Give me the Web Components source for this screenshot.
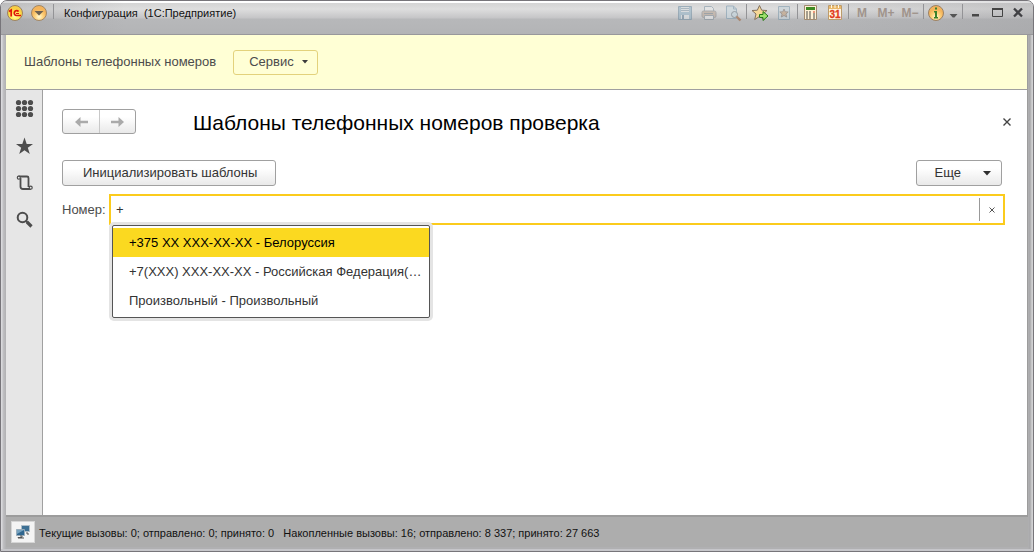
<!DOCTYPE html>
<html lang="ru">
<head>
<meta charset="utf-8">
<title>Конфигурация (1С:Предприятие)</title>
<style>
html, body { margin: 0; background: #fff; }
body { font-family: "Liberation Sans", Arial, sans-serif; font-size: 13px; line-height: 16px; color: #4c4c4c; }
</style>
</head>
<body>
<app-window>
  <title-bar slot="title" caption="Конфигурация  (1С:Предприятие)"></title-bar>
  <section-panel slot="section" caption="Шаблоны телефонных номеров">Сервис</section-panel>
  <side-nav slot="nav"></side-nav>
  <form-page caption="Шаблоны телефонных номеров проверка">
    <push-button slot="commands">Инициализировать шаблоны</push-button>
    <push-button slot="commands" menu>Еще</push-button>
    <suggest-field label="Номер:" value="+">
      <suggest-item selected>+375 XX XXX-XX-XX - Белоруссия</suggest-item>
      <suggest-item>+7(XXX) XXX-XX-XX - Российская Федерация(…</suggest-item>
      <suggest-item>Произвольный - Произвольный</suggest-item>
    </suggest-field>
  </form-page>
  <status-bar slot="status">Текущие вызовы: 0; отправлено: 0; принято: 0   Накопленные вызовы: 16; отправлено: 8 337; принято: 27 663</status-bar>
</app-window>
<script>
const define = (name, render) => customElements.define(name, class extends HTMLElement {
  constructor() {
    super();
    this.attachShadow({ mode: 'open' });
  }
  connectedCallback() {
    this.shadowRoot.innerHTML = '<style>*{box-sizing:border-box}button{font:inherit;color:inherit;margin:0;padding:0;border:0;background:none}svg{display:block}</style>' + render(this);
  }
});

define('app-window', () => `
<style>
:host { display: flex; flex-direction: column; box-sizing: border-box; min-height: 100vh; padding: 0 5px 4px;
  border: 1px solid #77757a; border-radius: 7px 7px 0 0;
  background: linear-gradient(90deg, #d9d9dc 0 1px, #c1c1c4 2px, #b0b0b2 5px, #b0b0b2 calc(100% - 5px), #a8a8aa calc(100% - 3px), #d0d0d2 calc(100% - 1px)); box-shadow: inset 0 -2px #c6c6ca; }
.middle { display: flex; flex: 1; border: 1px solid #9c9c9c; border-width: 0 1px 2px 0; background: #fff; }
main { flex: 1; min-width: 0; }
</style>
<slot name="title"></slot>
<slot name="section"></slot>
<div class="middle"><slot name="nav"></slot><main><slot></slot></main></div>
<slot name="status"></slot>`);

const icons = {
  save: '<g opacity=".55"><path d="M1.500 1.500h13v13h-13z" fill="#8fb0c4" stroke="#6d8ba0"/><path d="M4 2h8v5H4z" fill="#d9e0e4"/><path d="M4 3.500h8M4 5.500h8" stroke="#8298a8"/><path d="M4 10h8v4H4z" fill="#dde3e6"/><path d="M5 10h2v4H5z" fill="#68859b"/></g>',
  print: '<g opacity=".55"><path d="M3.500 6V1.500h7l2 2V6" fill="#e9eaeb" stroke="#7e95a5"/><rect x="1" y="6" width="14" height="6.500" rx="1.500" fill="#b9a493" stroke="#85878a"/><path d="M3.500 10.500h9v4h-9z" fill="#e9e9e9" stroke="#7e8c96"/><path d="M3 8.500h9" stroke="#707c84"/></g>',
  preview: '<g opacity=".58"><path d="M1.500 1h7l3 3v9.500h-10z" fill="#c9d8e0" stroke="#7c9bb0"/><path d="M8.500 1v3h3" fill="none" stroke="#7c9bb0"/><circle cx="9.500" cy="9.500" r="3" fill="#c2d5df" stroke="#6a7680"/><path d="M11.500 11.500l4 4" stroke="#a0633b" stroke-width="2.400"/></g>',
  star: '<path d="M7.500 .5l2.200 4.700 5.300.3-4 3.500 1.300 5.500-4.800-3-4.800 3L4 9 0 5.500l5.300-.3z" fill="#f6d796" stroke="#84705c"/><path d="M7.500 9.500H11V6.500l5 4.500-5 4.500v-3H7.500z" fill="#9fe06d" stroke="#257a17"/>',
  fav: '<g opacity=".55"><path d="M2.500 1.500h11v13h-11z" fill="#c4d2da" stroke="#7695a8"/><path d="M8 4l1.200 2.800 3 .2-2.300 2 .8 3L8 10.500 5.300 12l.8-3-2.300-2 3-.2z" fill="#bf9a74" stroke="#776d67"/></g>',
  calc: '<path d="M1.500.500h12v14h-12z" fill="#fff1d6" stroke="#a18a70"/><path d="M3 2h9v3H3z" fill="#3e8b22"/><path d="M3 7h2M6 7h2M3 9h2M6 9h2M3 11h2M6 11h2M3 13h2M6 13h2M10 9h2M10 11h2M10 13h2" stroke="#4b4a48"/><path d="M10 7h2" stroke="#d63c20"/>',
  calendar: '<path d="M1.500.500h13v14h-13z" fill="#fff6e4" stroke="#bb9b6c"/><path d="M2 1h12v3H2z" fill="#eab96a"/><path d="M4.500 0v3M8 0v3M11.500 0v3" stroke="#fff8e8"/><text x="8" y="13" text-anchor="middle" font-family="Liberation Sans, sans-serif" font-size="10" fill="#e13a1b" stroke="#e13a1b" stroke-width=".3">31</text>',
  info: '<circle cx="8" cy="8" r="7.500" fill="url(#g)" stroke="#9b8164"/><path d="M7 2.500h2v2H7zM6 6h3v6h1v1.500H6V12h1V7.500H6z" fill="#3b812b"/>',
  caret: '<path d="M3 9h9l-3.500 4h-2z" fill="#555"/>',
  min: '<path d="M5 9h7v2.500H5z" fill="#484848"/>',
  max: '<path d="M3.500 3.500h10v8h-10z" fill="none" stroke="#444"/><path d="M3 4h11" stroke="#444" stroke-width="2"/>',
  close: '<path d="M4 3.500l8 8M12 3.500l-8 8" stroke="#404044" stroke-width="2.300"/>'
};
const gold = '<defs><radialGradient id="g" cy=".75"><stop offset="0" stop-color="#fffbd9"/><stop offset=".55" stop-color="#ffd27b"/><stop offset="1" stop-color="#f4b45b"/></radialGradient></defs>';

define('tool-button', el => `
<style>
:host { display: block; width: 24px; }
:host([narrow]) { width: 22px; }
:host([slim]) { width: 14px; }
:host([frame]) { width: 21px; }
button { display: flex; width: 100%; height: 24px; align-items: center; justify-content: center; font: bold 12px/16px "Liberation Sans", Arial, sans-serif; color: #a0948c; }
svg { flex: none; width: 16px; height: 16px; overflow: visible; }
:host([slim]) svg { width: 14px; height: 14px; }
</style>
<button type="button" aria-label="${el.getAttribute('label')}">${el.hasAttribute('icon') ? `<svg viewBox="0 0 16 16">${gold}${icons[el.getAttribute('icon')]}</svg>` : '<slot></slot>'}</button>`);

define('title-bar', el => `
<style>
:host { display: flex; align-items: flex-start; height: 34px; box-sizing: border-box; margin: 0 -5px; padding: 0 5px 0 4px; border-radius: 6px 6px 0 0; border-bottom: 1px solid #98989b;
  background: linear-gradient(90deg, #98989b66, #c0c0c200 12%, #c0c0c200 75%, #98989b55), linear-gradient(#fff 0 2px, #d4d4d4 2px, #dedede 8px, #c5c5c7 17px, #b7b8ba 18px, #b3b4b6 33px); }
button { display: flex; align-items: center; justify-content: center; width: 20px; height: 24px; }
.menu { margin-left: 4px; }
h1 { flex: 1; min-width: 0; margin: 0; padding: 4px 0 0 9px; font-size: 11px; line-height: 16px; font-weight: normal; color: #111; white-space: pre; }
i { flex: none; width: 1px; height: 15px; margin: 3px 1px 0; background: #939396; }
.first { margin-left: 4px; }
</style>
<button type="button" aria-label="1С"><svg width="16" height="16" viewBox="0 0 16 16"><defs><radialGradient id="y" cy=".7"><stop offset="0" stop-color="#fffcae"/><stop offset=".6" stop-color="#ffec50"/><stop offset="1" stop-color="#f7ce45"/></radialGradient></defs><circle cx="8" cy="8" r="7.500" fill="url(#y)" stroke="#9b8164"/><path d="M2 6.500L4.200 5v6.500M11.500 6.600A2.400 2.400 0 1 0 9.500 10.500H14" fill="none" stroke="#e0180c" stroke-width="1.700"/><path d="M9 8.500h3" stroke="#e0180c"/></svg></button>
<button class="menu" type="button" aria-label="Главное меню"><svg width="16" height="16" viewBox="0 0 16 16">${gold}<circle cx="8" cy="8" r="7.500" fill="url(#g)" stroke="#a08667"/><path d="M3.500 6h9L8 10.500z" fill="#6d6152"/></svg></button>
<i class="first"></i>
<h1>${el.getAttribute('caption')}</h1>
<tool-button icon="save" label="Сохранить"></tool-button><tool-button icon="print" label="Печать"></tool-button><tool-button icon="preview" label="Просмотр"></tool-button><i></i>
<tool-button icon="star" label="Добавить в избранное"></tool-button><tool-button icon="fav" label="Избранное"></tool-button><i></i>
<tool-button icon="calc" label="Калькулятор"></tool-button><tool-button icon="calendar" label="Календарь"></tool-button><i></i>
<tool-button label="M">M</tool-button><tool-button label="M+">M+</tool-button><tool-button label="M−">M−</tool-button><i></i>
<tool-button narrow icon="info" label="Справка"></tool-button><tool-button slim icon="caret" label="Еще"></tool-button><i></i>
<tool-button narrow icon="min" label="Свернуть"></tool-button><tool-button frame icon="max" label="Развернуть"></tool-button><tool-button frame icon="close" label="Закрыть"></tool-button>`);

define('section-panel', el => `
<style>
:host { display: flex; align-items: center; gap: 17px; height: 55px; box-sizing: border-box; padding: 0 18px; background: #ffffd5; border-bottom: 1px solid #a0a0a0; border-right: 1px solid #9c9c9c; white-space: nowrap; }
button { display: flex; align-items: center; gap: 8px; height: 25px; padding: 0 9px 0 15px; border: 1px solid #e3d27c; border-radius: 3px; }
</style>
<span>${el.getAttribute('caption')}</span>
<button type="button"><slot></slot><svg width="6" height="4"><path d="M0 0h6l-3 3.500z" fill="#3c3c3c"/></svg></button>`);

define('side-nav', () => `
<style>
:host { display: block; width: 37px; box-sizing: border-box; background: #e6e6e6; border-right: 1px solid #a0a0a0; }
nav { display: flex; flex-direction: column; align-items: center; padding-top: 9px; gap: 17px; }
button { width: 20px; height: 20px; }
</style>
<nav>
<button type="button" aria-label="Меню функций"><svg width="20" height="20" fill="#4d4d4d"><g id="r"><circle cx="4.500" cy="3.500" r="2.600"/><circle cx="10.500" cy="3.500" r="2.600"/><circle cx="16.500" cy="3.500" r="2.600"/></g><use href="#r" y="6"/><use href="#r" y="12"/></svg></button>
<button type="button" aria-label="Избранное"><svg width="20" height="20" fill="#4d4d4d"><path d="M10.500 1.500l2.200 6.500H19l-5.200 3.700 2 6.300-5.300-3.800L5.200 18l2-6.300L2 8h6.300z"/></svg></button>
<button type="button" aria-label="История"><svg width="20" height="20" fill="none" stroke="#4d4d4d"><path d="M4.500 3.500h8.500q1.500 0 1.500 1.500v9M6.500 5v8.500q0 2.500 2.500 2.500h8" stroke-width="1.800"/><circle cx="4.800" cy="4.700" r="1.500" fill="#e6e6e6" stroke-width="1.200"/><circle cx="16.700" cy="14.700" r="1.500" fill="#e6e6e6" stroke-width="1.200"/></svg></button>
<button type="button" aria-label="Поиск"><svg width="20" height="20" fill="none" stroke="#4d4d4d"><circle cx="8.500" cy="7.500" r="4.800" stroke-width="2"/><path d="M12 11l1.500 1.500" stroke-width="2"/><path d="M13 12l4.500 4.500" stroke-width="3.200"/></svg></button>
</nav>`);

define('push-button', el => `
<style>
:host { display: block; }
button { display: flex; align-items: center; gap: 20px; height: 26px; padding: 0 18px 0 20px; border: 1px solid #a0a0a0; border-radius: 3px; background: linear-gradient(#fff 30%, #e9e9e9); color: #333; white-space: nowrap; }
:host([menu]) button { padding: 0 10px 0 18px; }
:host([menu]) button { gap: 22px; }
</style>
<button type="button"><slot></slot>${el.hasAttribute('menu') ? '<svg width="8" height="5"><path d="M0 0h8L4 4.500z" fill="#2f2f2f"/></svg>' : ''}</button>`);

define('form-page', el => `
<style>
:host { display: block; padding: 19px 22px 24px 19px; }
header { display: flex; align-items: center; height: 25px; }
.history { display: flex; height: 25px; border: 1px solid #a0a0a0; border-radius: 3px; background: linear-gradient(#fff 30%, #e9e9e9); }
.history button { display: flex; align-items: center; justify-content: center; width: 36px; }
.history button + button { border-left: 1px solid #c8c8c8; }
h2 { flex: 1; margin: 0 0 0 57px; padding-top: 2px; font-size: 21px; line-height: 24px; font-weight: normal; color: #000; }
.close { margin-right: -10px; padding: 4px; }
.commands { display: flex; justify-content: space-between; margin: 26px 3px 8px 0; }
</style>
<header>
<div class="history"><button type="button" aria-label="Назад"><svg width="16" height="12"><path d="M15 6H5" stroke="#aaa" stroke-width="2.500"/><path d="M7.500 1L2 6l5.500 5z" fill="#aaa"/></svg></button><button type="button" aria-label="Вперед"><svg width="16" height="12"><path d="M1 6h10" stroke="#aaa" stroke-width="2.500"/><path d="M8.500 1L14 6l-5.500 5z" fill="#aaa"/></svg></button></div>
<h2>${el.getAttribute('caption')}</h2>
<button class="close" type="button" aria-label="Закрыть"><svg width="8" height="8"><path d="M.500.500l7 7M7.500.500l-7 7" stroke="#444" stroke-width="1.400"/></svg></button>
</header>
<div class="commands"><slot name="commands"></slot></div>
<slot></slot>`);

define('suggest-field', el => `
<style>
:host { display: flex; align-items: center; }
label { width: 47px; flex: none; }
.box { position: relative; display: flex; align-items: center; flex: 1; height: 31px; border: 2px solid #fbcb1c; background: #fff; }
input { flex: 1; min-width: 0; height: 24px; margin: 0; padding: 0 5px; border: 0; outline: 0; background: none; font: inherit; color: #333; }
.clear { display: flex; align-items: center; justify-content: center; width: 24px; height: 23px; border-left: 1px solid #999; }
.list { position: absolute; left: 1px; top: 29px; width: 318px; max-width: 100%; padding: 2px 0; border: 1px solid #555; border-radius: 2px; background: #fff; box-shadow: 0 0 0 3px #e4e4e4; }
</style>
<label for="field">${el.getAttribute('label')}</label>
<div class="box"><input id="field" type="text" value="${el.getAttribute('value')}" autocomplete="off"><button class="clear" type="button" aria-label="Очистить"><svg width="6" height="6"><path d="M.500.500l5 5M5.500.500l-5 5" stroke="#555"/></svg></button>
<div class="list" role="listbox" aria-label="Варианты"><slot></slot></div></div>`);

define('suggest-item', el => `
<style>
:host { display: block; padding: 0 8px 0 16px; line-height: 29px; color: #333; white-space: nowrap; overflow: hidden; }
:host([selected]) { background: #fbd920; color: #000; }
</style>
<div role="option" aria-selected="${el.hasAttribute('selected')}"><slot></slot></div>`);

define('status-bar', () => `
<style>
:host { display: flex; align-items: center; gap: 4px; height: 30px; box-sizing: border-box; padding: 0 5px; background: #adadad; font-size: 11px; color: #111; white-space: pre; }
button { display: flex; align-items: center; justify-content: center; width: 24px; height: 22px; border: 1px solid #d6d6d6; background: #f4f4f4; }
span { padding-top: 2px; }
</style>
<button type="button" aria-label="Соединение"><svg width="16" height="14"><path d="M6.500.500h8v6h-8z" fill="#3d7094" stroke="#aebdc8"/><path d="M1.500 4.500h8v6h-8z" fill="#2f668f" stroke="#98acba"/><path d="M2 5h7L2 9z" fill="#76a2bf"/><path d="M5 11h2v1.500H3V13h6M12 7v2h2" fill="none" stroke="#555"/></svg></button><span><slot></slot></span>`);
</script>
</body>
</html>
